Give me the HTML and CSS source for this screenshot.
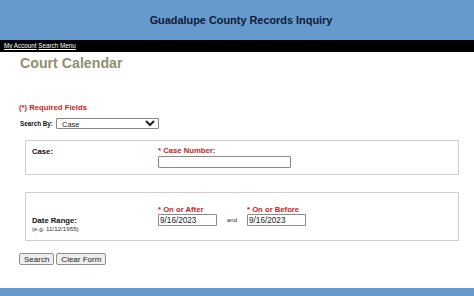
FILE: index.html
```html
<!DOCTYPE html>
<html lang="en">
<head>
    <meta charset="UTF-8">
    <meta name="viewport" content="width=device-width, initial-scale=1.0">
    <title>Court Calendar</title>
    <link rel="stylesheet" href="styles.css">
</head>
<body>
  <header class="banner">
     <h1 class="banner-title">Guadalupe County Records Inquiry</h1>
  </header>
  <nav class="topnav">
     <a href="#">My Account</a> <a href="#">Search Menu</a>
  </nav>

  <main class="content">
     <h2 class="page-title">Court Calendar</h2>
     <p class="required">(*) Required Fields</p>

     <div class="search-by">
        <label for="searchBy">Search By:</label>
        <select id="searchBy">
           <option>Case</option>
        </select>
     </div>

     <div class="box box-case">
        <div class="box-label">Case:</div>
        <div class="field">
           <label class="req-label" for="caseNumber">* Case Number:</label>
           <input id="caseNumber" class="input-case" type="text">
        </div>
     </div>

     <div class="box box-date">
        <div class="box-label date-label">
           Date Range:
           <span class="hint">(e.g. 11/12/1955)</span>
        </div>
        <div class="date-fields">
           <div class="field">
              <label class="req-label" for="dateAfter">* On or After</label>
              <input id="dateAfter" class="input-date" type="text" value="9/16/2023">
           </div>
           <span class="and">and</span>
           <div class="field">
              <label class="req-label" for="dateBefore">* On or Before</label>
              <input id="dateBefore" class="input-date" type="text" value="9/16/2023">
           </div>
        </div>
     </div>

     <div class="actions">
        <button type="submit">Search</button>
        <button type="reset">Clear Form</button>
     </div>
  </main>

  <footer class="bottom-bar"></footer>
</body>
</html>
```

FILE: styles.css
```css
* {
  margin: 0;
  padding: 0;
  box-sizing: border-box;
  font-family: "Liberation Sans", Arial, sans-serif;
}

body {
  background-color: #fff;
  color: #111;
}

.banner {
  height: 40px;
  background-color: #6699cc;
  display: flex;
  align-items: center;
  justify-content: center;
}

.banner-title {
  font-size: 10.9px;
  font-weight: bold;
  color: #0b1b3a;
  padding-left: 8px;
}

.topnav {
  height: 12px;
  background-color: #000;
  padding-left: 4px;
  font-size: 6.3px;
  line-height: 12px;
}

.topnav a {
  color: #fff;
}

.content {
  padding: 0 15px 0 19px;
}

.page-title {
  margin-top: 3px;
  font-size: 14.2px;
  line-height: 16px;
  color: #8f8f70;
  padding-left: 1px;
}

.required {
  margin-top: 32px;
  font-size: 7.7px;
  line-height: 9px;
  font-weight: bold;
  color: #c41e1e;
}

.search-by {
  margin-top: 6px;
  height: 11px;
  display: flex;
  align-items: center;
  gap: 3px;
  padding-left: 1px;
}

.search-by label {
  font-size: 6.3px;
  font-weight: bold;
  width: 33px;
}

.search-by select {
  width: 103px;
  height: 11px;
  font-size: 7.5px;
  padding: 0 1px;
  border: 1px solid #888;
  border-radius: 1px;
  background-color: #fff;
  color: #222;
}

.box {
  margin-left: 6px;
  border: 1px solid #cfcfcf;
  display: grid;
  grid-template-columns: 126px 1fr;
  align-content: start;
  align-items: start;
  padding: 0 6px;
}

.box-case {
  margin-top: 11px;
  height: 35px;
  padding-top: 5px;
}

.box-date {
  margin-top: 17px;
  height: 49px;
  padding-top: 12px;
}

.box-label {
  font-size: 7.7px;
  line-height: 9px;
  font-weight: bold;
  padding-top: 1px;
}

.date-label {
  padding-top: 11px;
}

.hint {
  display: block;
  font-size: 6.2px;
  line-height: 8px;
  font-weight: normal;
  color: #333;
}

.field {
  display: flex;
  flex-direction: column;
  align-items: flex-start;
}

.req-label {
  font-size: 7.7px;
  line-height: 9px;
  font-weight: bold;
  color: #c41e1e;
}

.box input {
  height: 12px;
  font-size: 8.2px;
  padding: 0 1px;
  border: 1px solid #8a8a8a;
  border-radius: 1px;
  color: #222;
  background-color: #fff;
}

.input-case {
  width: 133px;
  margin-top: 1px;
}

.input-date {
  width: 59px;
}

.date-fields {
  display: flex;
  align-items: flex-end;
  gap: 10px;
}

.and {
  font-size: 6px;
  line-height: 12px;
  color: #333;
}

.actions {
  margin-top: 12px;
  display: flex;
  gap: 2px;
}

.actions button {
  height: 12px;
  font-size: 8px;
  padding: 0 4px;
  background-color: #efefef;
  border: 1px solid #8f8f8f;
  border-radius: 2px;
  color: #222;
}

.bottom-bar {
  margin-top: 23px;
  height: 8px;
  background-color: #6699cc;
}
```
